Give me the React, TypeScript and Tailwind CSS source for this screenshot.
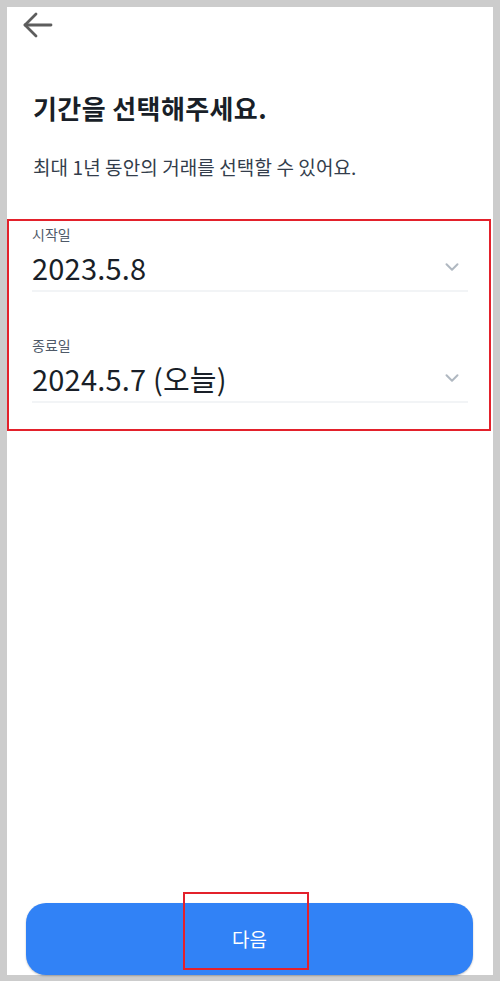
import { ChevronDown } from 'lucide-react';

const font = { fontFamily: '"Noto Sans CJK KR", "Noto Sans", sans-serif' };

interface DateFieldProps {
  label: string;
  value: string;
}

const DateField = ({ label, value }: DateFieldProps) => (
  <div className="flex flex-col">
    <span className="text-[14px] leading-[20px] text-[#4e5968]">{label}</span>
    <div className="flex items-center justify-between h-[48px] border-b-2 border-[#f2f4f6]">
      <span className="text-[29px] leading-[36px] text-[#191f28] tracking-[0.2px]">{value}</span>
      <ChevronDown className="w-[22px] h-[22px] text-[#b0b8c1] mr-[5px]" strokeWidth={2.2} />
    </div>
  </div>
);

export default function App() {
  return (
    <div className="relative w-[500px] h-[981px] bg-[#cccccc] pt-[7px] pl-[7px] pr-[7px] pb-[6px]" style={font}>
      <div className="flex flex-col w-[486px] h-[968px] bg-white">
        <div className="h-[44px] flex items-start pt-[4px] pl-[16px]">
          <svg width="30" height="28" viewBox="0 0 30 28" fill="none" stroke="#5d5d5d" strokeWidth="2.8" strokeLinecap="round" strokeLinejoin="round">
            <path d="M2 14h26" />
            <path d="M13 3 2 14l11 11" />
          </svg>
        </div>

        <div className="px-[26px] pt-[40px]">
          <h1 className="text-[26px] leading-[34px] font-bold text-[#191f28] tracking-[0.4px]">기간을 선택해주세요.</h1>
          <p className="mt-[29px] text-[19px] leading-[26px] text-[#333d4b] tracking-[0.1px]">최대 1년 동안의 거래를 선택할 수 있어요.</p>
        </div>

        <div className="flex flex-col gap-[43px] px-[25px] pt-[44px]">
          <DateField label="시작일" value="2023.5.8" />
          <DateField label="종료일" value="2024.5.7 (오늘)" />
        </div>

        <div className="flex-1" />

        <div className="px-[19px]">
          <button className="w-[447px] h-[72px] rounded-[20px] bg-[#3182f6] text-white text-[19px] shadow-[0_1px_2px_rgba(0,0,0,0.25)]">
            다음
          </button>
        </div>
      </div>

      <div className="absolute left-[7px] top-[219px] w-[484px] h-[212px] border-2 border-[#e3212b] pointer-events-none" />
      <div className="absolute left-[183px] top-[892px] w-[126px] h-[78px] border-2 border-[#e3212b] pointer-events-none" />
    </div>
  );
}
